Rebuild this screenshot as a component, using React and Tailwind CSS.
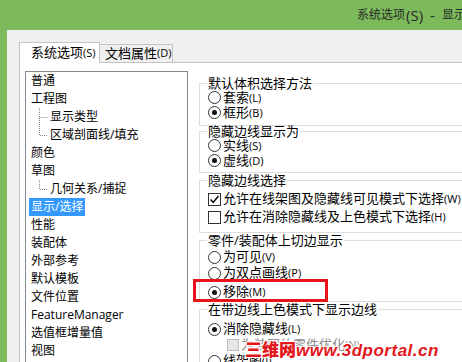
import React from "react"

const tree = [
    { t: '普通' },
    { t: '工程图' },
    { t: '显示类型', child: true },
    { t: '区域剖面线/填充', child: true, last: true },
    { t: '颜色' },
    { t: '草图' },
    { t: '几何关系/捕捉', child: true, last: true },
    { t: '显示/选择', sel: true },
    { t: '性能' },
    { t: '装配体' },
    { t: '外部参考' },
    { t: '默认模板' },
    { t: '文件位置' },
    { t: 'FeatureManager' },
    { t: '选值框增量值' },
    { t: '视图' },
]

function Acc({ k }) {
    return <span className="text-[11px]">({k})</span>
}

function Radio({ checked, label, k, row }) {
    return (
        <div className={"flex items-center " + row}>
            <span className="w-[13px] h-[13px] rounded-full border border-[#333] bg-white flex items-center justify-center shrink-0">
                {checked && <span className="w-[5px] h-[5px] rounded-full bg-[#111]" />}
            </span>
            <span className="ml-[2px] whitespace-nowrap">{label}<Acc k={k} /></span>
        </div>
    )
}

function Check({ checked, label, k, row }) {
    return (
        <div className={"flex items-center " + row}>
            <span className="w-[13px] h-[13px] border border-[#333] bg-white flex items-center justify-center shrink-0">
                {checked && (
                    <svg width="11" height="11" viewBox="0 0 11 11">
                        <path d="M1.5 5.5 L4.2 8.3 L9.5 2" fill="none" stroke="#111" strokeWidth="1.6" />
                    </svg>
                )}
            </span>
            <span className="ml-[2px] whitespace-nowrap">{label}<Acc k={k} /></span>
        </div>
    )
}

function Group({ title, className, children }) {
    return (
        <fieldset className={"border border-[#dcdcdc] pl-[8px] w-[320px] " + className}>
            <legend className="px-[1px] -ml-[1px] leading-[14px]">{title}</legend>
            {children}
        </fieldset>
    )
}

function TreeRow({ item }) {
    if (item.child) {
        return (
            <div className="h-[18px] flex items-center pl-[13px]">
                <svg width="10" height="18" viewBox="0 0 10 18" className="shrink-0">
                    <path d={item.last ? "M0.5 0 V9.5 H9" : "M0.5 0 V18 M0.5 9.5 H9"} fill="none" stroke="#8a8a8a" strokeDasharray="1 1" />
                </svg>
                <span className="ml-[1px] whitespace-nowrap">{item.t}</span>
            </div>
        )
    }
    return (
        <div className="h-[18px] flex items-center pl-[5px]">
            {item.sel
                ? <span className="bg-[#3399ff] text-white h-[18px] leading-[18px] px-[2px] -ml-[2px]">{item.t}</span>
                : <span className="whitespace-nowrap">{item.t}</span>}
        </div>
    )
}

export default function App() {
    return (
        <div className="relative w-[462px] h-[362px] overflow-hidden bg-[#7cba5b] flex flex-col font-['Open_Sans','Noto_Sans_CJK_SC',sans-serif] text-black">
            <div className="h-[30px] shrink-0 flex items-center pl-[357px] whitespace-nowrap text-[#2a2a2a] text-[12px]">
                系统选项<span className="text-[15px] ml-[1px]">(S)</span><span className="text-[15px] mx-[7px]">-</span>显示/选择
            </div>

            <div className="flex-1 ml-[7px] bg-[#f0f0f0] pt-[12px] pl-[12px] flex flex-col min-h-0">
                <div className="flex items-end h-[20px] text-[13px] shrink-0">
                    <div className="relative z-10 -mb-[1px] w-[81px] h-[21px] bg-white border border-b-0 border-[#c4c4c4] pl-[11px] flex items-center whitespace-nowrap">
                        系统选项<Acc k="S" />
                    </div>
                    <div className="w-[73px] h-[18px] border border-l-0 border-b-0 border-[#c4c4c4] pl-[5px] flex items-center whitespace-nowrap">
                        文档属性<Acc k="D" />
                    </div>
                </div>

                <div className="flex-1 bg-white border-l border-t border-[#c4c4c4] pl-[5px] pt-[8px] flex items-start min-h-0">
                    <div className="w-[163px] h-[320px] shrink-0 border border-[#828790] text-[12px]">
                        {tree.map((item) => <TreeRow key={item.t} item={item} />)}
                    </div>

                    <div className="ml-[11px] w-[320px] shrink-0 text-[13px] flex flex-col">
                        <Group title="默认体积选择方法" className="mt-[5px] pb-[5px]">
                            <Radio row="h-[15px]" label="套索" k="L" />
                            <Radio row="h-[15px]" label="框形" k="B" checked />
                        </Group>
                        <Group title="隐藏边线显示为" className="-mt-[2px] pb-[4px]">
                            <Radio row="h-[15px]" label="实线" k="S" />
                            <Radio row="h-[15px]" label="虚线" k="D" checked />
                        </Group>
                        <Group title="隐藏边线选择" className="pb-[6px]">
                            <Check row="h-[18px] mt-[3px]" label="允许在线架图及隐藏线可见模式下选择" k="W" checked />
                            <Check row="h-[18px]" label="允许在消除隐藏线及上色模式下选择" k="H" />
                        </Group>
                        <Group title="零件/装配体上切边显示" className="pb-0">
                            <Radio row="h-[16px] mt-[2px]" label="为可见" k="V" />
                            <Radio row="h-[16px]" label="为双点画线" k="P" />
                            <Radio row="h-[18px] mt-[2px]" label="移除" k="M" checked />
                        </Group>
                        <Group title="在带边线上色模式下显示边线" className="pb-[4px]">
                            <Radio row="h-[18px] mt-[4px]" label="消除隐藏线" k="L" checked />
                            <div className="h-[14px] flex items-center pl-[19px] text-[#8d8d8d]">
                                <span className="w-[12px] h-[12px] border border-[#bcbcbc] bg-[#e6e6e6] shrink-0" />
                                <span className="ml-[2px] whitespace-nowrap">为装配体零件优化<Acc k="N" /></span>
                            </div>
                            <Radio row="h-[18px]" label="线架图" k="I" />
                        </Group>
                    </div>
                </div>
            </div>

            <div className="absolute left-[193px] top-[279px] w-[135px] h-[23px] border-[3px] border-[#e8141c]" />

            <div className="absolute left-[245px] top-[336px] whitespace-nowrap font-['Liberation_Sans',sans-serif] font-bold italic text-[#e3161c] [text-shadow:1px_1px_0_#fff,-1px_-1px_0_#fff,1px_-1px_0_#fff,-1px_1px_0_#fff]">
                <span className="text-[17px] not-italic font-['Noto_Sans_CJK_SC',sans-serif] font-black">三维网</span>
                <span className="text-[17px] tracking-[0.5px]">www.3dportal.cn</span>
            </div>
        </div>
    )
}
